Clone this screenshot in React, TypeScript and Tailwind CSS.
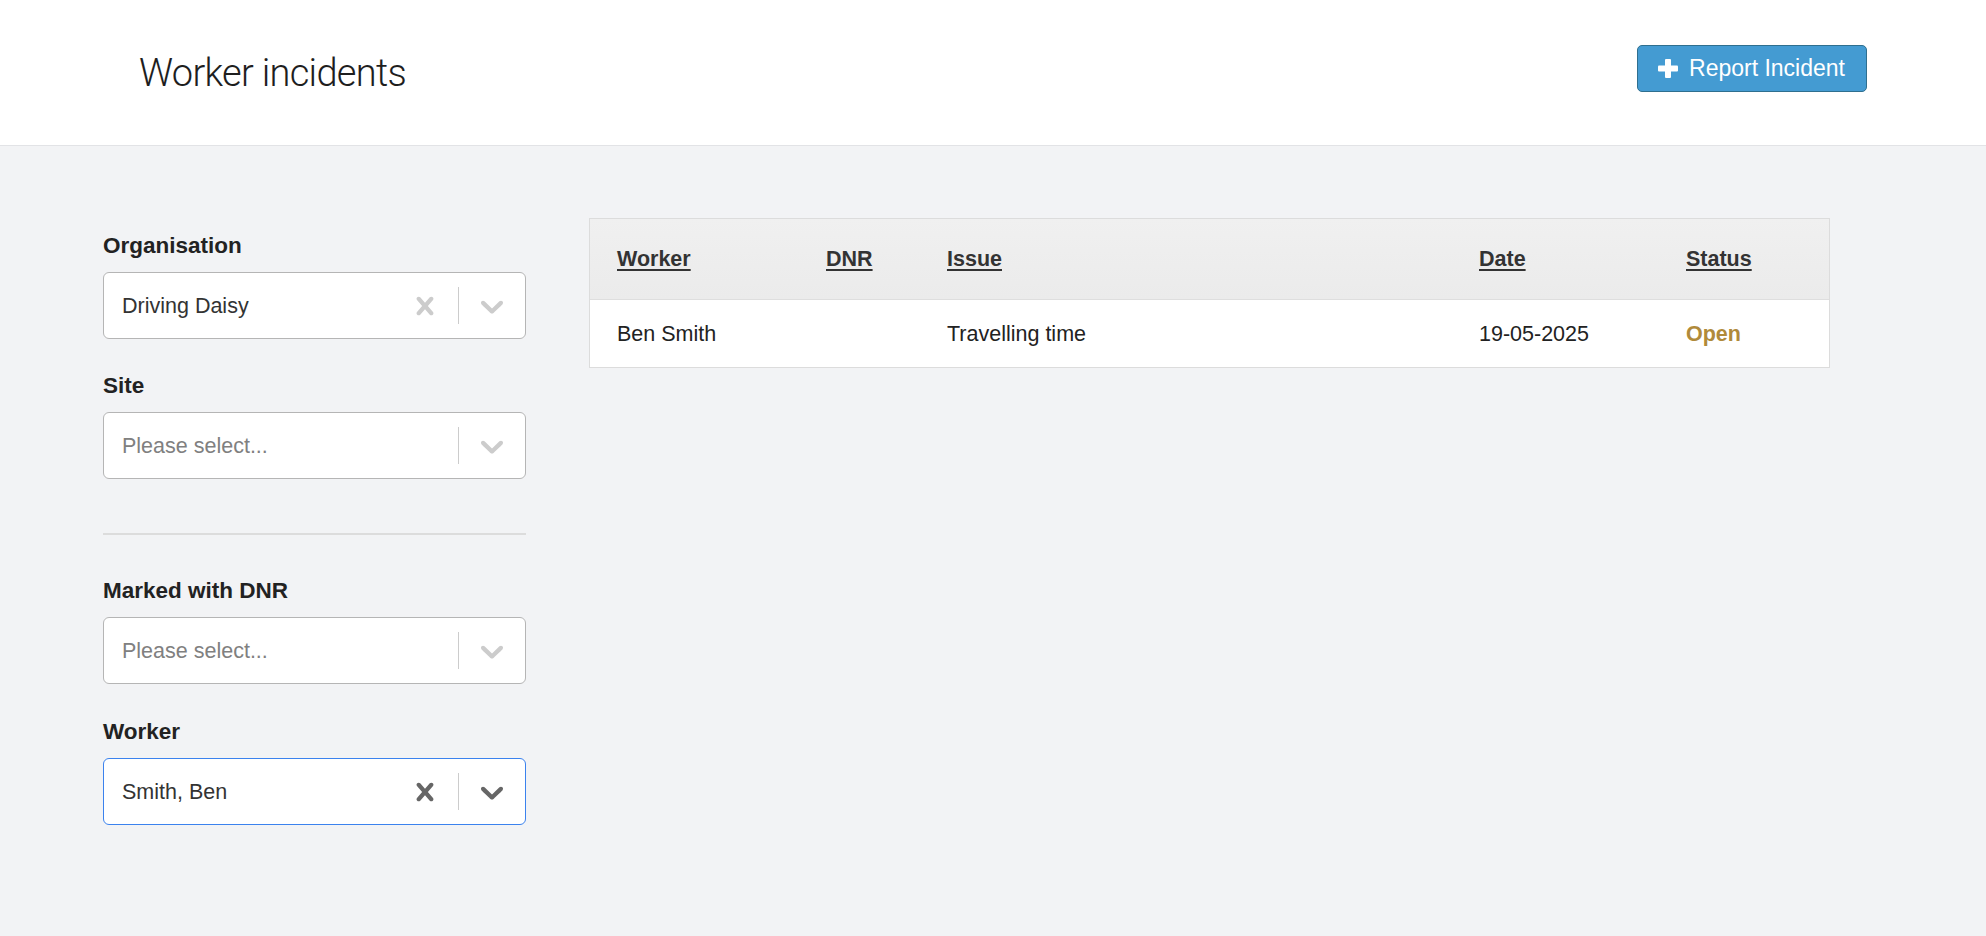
import React from "react";

const Cross = ({ color }: { color: string }) => (
  <svg width="36" height="36" viewBox="0 0 20 20" fill={color} aria-hidden="true">
    <path d="M14.348 14.849c-0.469 0.469-1.229 0.469-1.697 0l-2.651-3.030-2.651 3.029c-0.469 0.469-1.229 0.469-1.697 0-0.469-0.469-0.469-1.229 0-1.697l2.758-3.15-2.759-3.152c-0.469-0.469-0.469-1.228 0-1.697s1.228-0.469 1.697 0l2.652 3.031 2.651-3.031c0.469-0.469 1.228-0.469 1.697 0s0.469 1.229 0 1.697l-2.758 3.152 2.758 3.150c0.469 0.469 0.469 1.229 0 1.698z" />
  </svg>
);

const Chevron = ({ color }: { color: string }) => (
  <svg width="38" height="38" viewBox="0 0 20 20" fill={color} aria-hidden="true">
    <path d="M4.516 7.548c0.436-0.446 1.043-0.481 1.576 0l3.908 3.747 3.908-3.747c0.533-0.481 1.141-0.446 1.574 0 0.436 0.445 0.408 1.197 0 1.615-0.406 0.418-4.695 4.502-4.695 4.502-0.217 0.223-0.502 0.335-0.787 0.335s-0.57-0.112-0.789-0.335c0 0-4.287-4.084-4.695-4.502s-0.436-1.170 0-1.615z" />
  </svg>
);

type SelectProps = { value?: string; focused?: boolean };

const Select = ({ value, focused }: SelectProps) => {
  const icon = focused ? "#666666" : "#cccccc";
  return (
    <div
      className={
        focused
          ? "h-[67px] rounded-[6px] border border-[#3b82ee] bg-white flex items-center"
          : "h-[67px] rounded-[6px] border border-[#b5b5b5] bg-white flex items-center"
      }
    >
      <div className="flex-1 pl-[18px] text-[21.5px] leading-[28px]">
        {value ? (
          <span className="text-[#333333]">{value}</span>
        ) : (
          <span className="text-[#808080]">Please select...</span>
        )}
      </div>
      {value && (
        <div className="w-[66px] h-full flex items-center justify-center">
          <Cross color={icon} />
        </div>
      )}
      <div className="w-px h-[37px] bg-[#cccccc]" />
      <div className="w-[66px] h-full flex items-center justify-center">
        <Chevron color={icon} />
      </div>
    </div>
  );
};

const Label = ({ children }: { children: React.ReactNode }) => (
  <div className="text-[22.5px] leading-[30px] font-bold text-[#222222] mb-[11px]">{children}</div>
);

const cols = "grid grid-cols-[207px_121px_532px_207px_1fr] items-center";

export default function App() {
  return (
    <div className="min-h-screen bg-[#f2f3f5] font-['Liberation_Sans',Arial,sans-serif] text-[#222222]">
      <header className="h-[146px] bg-white border-b border-[#e2e3e6] flex items-center justify-between pl-[139px] pr-[119px]">
        <h1 className="font-['Roboto',sans-serif] font-light text-[38px] leading-[48px] tracking-[-0.7px] text-[#1e1e1e] mt-[1px]">
          Worker incidents
        </h1>
        <button className="h-[47px] mb-[9px] flex items-center gap-[11px] pl-[20px] pr-[21px] rounded-[5px] bg-[#449bd2] border border-[#2f6f8f] text-white text-[23px]">
          <svg width="20" height="19" viewBox="0 0 20 19" fill="white" aria-hidden="true">
            <rect x="0" y="6.5" width="20" height="6" rx="1" />
            <rect x="7" y="0" width="6" height="19" rx="1" />
          </svg>
          <span>Report Incident</span>
        </button>
      </header>

      <main className="flex pl-[103px] pt-[72px] gap-[63px]">
        <aside className="w-[423px] pt-[13px]">
          <Label>Organisation</Label>
          <Select value="Driving Daisy" />
          <div className="mt-[32px]">
            <Label>Site</Label>
            <Select />
          </div>
          <div className="mt-[54px] h-[2px] bg-[#dcdcdc]" />
          <div className="mt-[41px]">
            <Label>Marked with DNR</Label>
            <Select />
          </div>
          <div className="mt-[33px]">
            <Label>Worker</Label>
            <Select value="Smith, Ben" focused />
          </div>
        </aside>

        <section className="w-[1241px]">
          <div className="border border-[#dcdcdc] bg-white">
            <div className={`${cols} h-[81px] bg-gradient-to-b from-[#f0f0f0] to-[#ebebeb] border-b border-[#dedede] text-[21.5px] font-bold text-[#333333]`}>
              <div className="pl-[27px]"><span className="underline underline-offset-[3px]">Worker</span></div>
              <div className="pl-[29px]"><span className="underline underline-offset-[3px]">DNR</span></div>
              <div className="pl-[29px]"><span className="underline underline-offset-[3px]">Issue</span></div>
              <div className="pl-[29px]"><span className="underline underline-offset-[3px]">Date</span></div>
              <div className="pl-[29px]"><span className="underline underline-offset-[3px]">Status</span></div>
            </div>
            <div className={`${cols} h-[67px] text-[21.5px] text-[#222222]`}>
              <div className="pl-[27px] pt-[2px]">Ben Smith</div>
              <div className="pl-[29px]"></div>
              <div className="pl-[29px] pt-[2px]">Travelling time</div>
              <div className="pl-[29px] pt-[2px]">19-05-2025</div>
              <div className="pl-[29px] pt-[2px] font-bold text-[#b08a3a]">Open</div>
            </div>
          </div>
        </section>
      </main>
    </div>
  );
}
